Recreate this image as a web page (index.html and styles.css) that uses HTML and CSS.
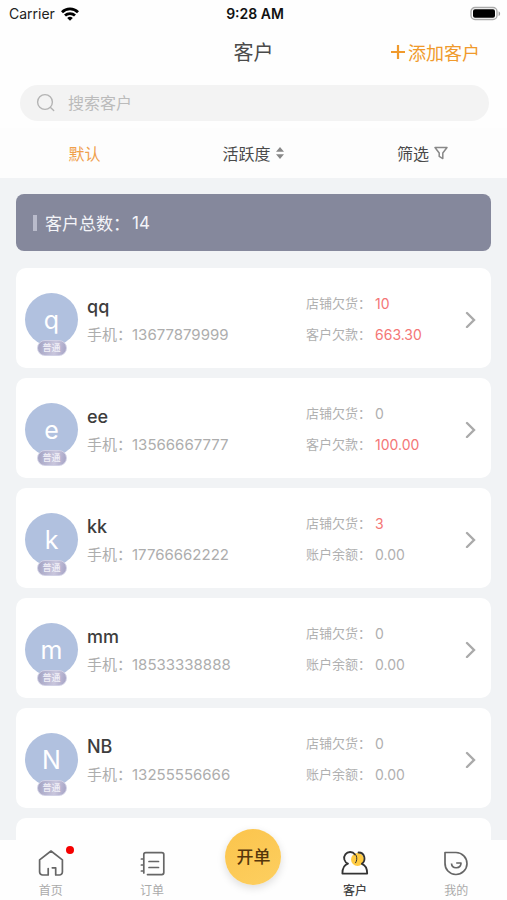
FILE: index.html
```html
<!DOCTYPE html>
<html lang="zh-CN">
<head>
<meta charset="utf-8">
<meta name="viewport" content="width=device-width, initial-scale=1">
<title>客户</title>
<link rel="stylesheet" href="styles.css">
</head>
<body>
<div class="app">
  <div class="status">
    <div class="carrier">Carrier
      <svg width="18" height="14" viewBox="0 0 18 14" fill="none" stroke="#000" stroke-width="2.8"><path d="M1 5.2a11.5 11.5 0 0 1 16 0M4 8.6a7.2 7.2 0 0 1 10 0"/><path d="M9 13.8 6.2 11a4 4 0 0 1 5.6 0z" fill="#000" stroke="none"/></svg>
    </div>
    <div class="time">9:28 AM</div>
    <svg class="battery" width="31" height="16" viewBox="0 0 31 16"><rect x="1" y="1.5" width="26" height="12" rx="4" fill="#fff" stroke="#aaa" stroke-width="1.4"/><rect x="3" y="3.2" width="22" height="8.600" rx="2" fill="#000"/><path d="M28.6 5.2c2 .8 2 4 0 4.8z" fill="#999"/></svg>
  </div>
  <header class="nav">
    <h1>客户</h1>
    <button class="add" type="button"><svg width="16" height="16" viewBox="0 0 16 16" stroke="currentColor" stroke-width="2.2"><path d="M8 1v14M1 8h14"/></svg>添加客户</button>
  </header>
  <label class="search">
    <svg width="20" height="20" viewBox="0 0 20 20" fill="none" stroke="#b4b4b4" stroke-width="1.4" stroke-linecap="round"><circle cx="9" cy="9" r="7.4"/><path d="m14.5 14.5 3.2 3"/></svg>
    <input type="search" placeholder="搜索客户" aria-label="搜索客户">
  </label>
  <div class="filters">
    <button class="active" type="button">默认</button>
    <button type="button">活跃度<svg width="10" height="14" viewBox="0 0 10 14" fill="#888"><path d="M5 1 9 5.8H1zM5 13 1 8.2h8z"/></svg></button>
    <button type="button">筛选<svg class="funnel" width="14" height="14" viewBox="0 0 14 14" fill="none" stroke="#888" stroke-width="1.5" stroke-linejoin="round"><path d="M1 1.500h12L8.800 7v5.600L5.200 10.400V7z"/></svg></button>
  </div>
  <main class="list">
    <div class="total"><i></i>客户总数：<span>14</span></div>
    <a class="card" href="#"><div class="avatar">q<em>普通</em></div><div class="who"><h2>qq</h2><p>手机：<span>13677879999</span></p></div><div class="owed"><p>店铺欠货：<b>10</b></p><p>客户欠款：<b>663.30</b></p></div><svg class="chevron" width="12" height="18" viewBox="0 0 12 18"><path d="m2 3 7 7-7 7"/></svg></a>
    <a class="card" href="#"><div class="avatar">e<em>普通</em></div><div class="who"><h2>ee</h2><p>手机：<span>13566667777</span></p></div><div class="owed"><p>店铺欠货：<span>0</span></p><p>客户欠款：<b>100.00</b></p></div><svg class="chevron" width="12" height="18" viewBox="0 0 12 18"><path d="m2 3 7 7-7 7"/></svg></a>
    <a class="card" href="#"><div class="avatar">k<em>普通</em></div><div class="who"><h2>kk</h2><p>手机：<span>17766662222</span></p></div><div class="owed"><p>店铺欠货：<b>3</b></p><p>账户余额：<span>0.00</span></p></div><svg class="chevron" width="12" height="18" viewBox="0 0 12 18"><path d="m2 3 7 7-7 7"/></svg></a>
    <a class="card" href="#"><div class="avatar">m<em>普通</em></div><div class="who"><h2>mm</h2><p>手机：<span>18533338888</span></p></div><div class="owed"><p>店铺欠货：<span>0</span></p><p>账户余额：<span>0.00</span></p></div><svg class="chevron" width="12" height="18" viewBox="0 0 12 18"><path d="m2 3 7 7-7 7"/></svg></a>
    <a class="card" href="#"><div class="avatar">N<em>普通</em></div><div class="who"><h2>NB</h2><p>手机：<span>13255556666</span></p></div><div class="owed"><p>店铺欠货：<span>0</span></p><p>账户余额：<span>0.00</span></p></div><svg class="chevron" width="12" height="18" viewBox="0 0 12 18"><path d="m2 3 7 7-7 7"/></svg></a>
    <div class="card"></div>
  </main>
  <nav class="tabs">
    <a href="#"><span class="icon"><svg width="28" height="28" viewBox="0 0 28 28" fill="none" stroke="#666" stroke-width="1.7" stroke-linejoin="round" stroke-linecap="round"><path d="M11.200 19.500V26H5.600a3 3 0 0 1-3-3V10.800L14 2l11.400 8.800V23a3 3 0 0 1-3 3h-3.700v-7.200h-3.400"/></svg><i class="dot"></i></span>首页</a>
    <a href="#"><span class="icon"><svg width="28" height="28" viewBox="0 0 28 28" fill="none" stroke="#666" stroke-width="1.7" stroke-linecap="round"><path d="M5.800 6.500V5.600a2 2 0 0 1 2-2h16a2 2 0 0 1 2 2v18a2 2 0 0 1-2 2H9.500M5.800 6.500V24M3.400 10h2.400M3.400 16h2.400M3.400 22h2.400M11 12.500h9.500M11 18.500h9.500"/></svg></span>订单</a>
    <a class="create" href="#"><span>开单</span></a>
    <a class="current" href="#"><span class="icon"><svg width="28" height="28" viewBox="0 0 28 28" fill="none" stroke="#333" stroke-width="1.8" stroke-linecap="round" stroke-linejoin="round"><ellipse cx="16.500" cy="10.500" rx="6.500" ry="6.500" fill="#ffcb42" stroke="none"/><path d="M14 5.500A6 6 0 1 0 7 14.600C3 15.800 1.400 19.500 1.400 24.600h24.800c0-5-1.400-8.400-5.400-9.800 4.400-3 3.400-11.300-3.300-11.300"/><path d="M15.200 6.500c1 2.400.8 5.300-.6 7.300" stroke-width="1"/></svg></span>客户</a>
    <a href="#"><span class="icon"><svg width="28" height="28" viewBox="0 0 28 28" fill="none" stroke="#666" stroke-width="1.7" stroke-linejoin="round"><path d="M3 3.500H14A11 11 0 1 1 3 14z"/><path d="M9.500 14.500c.5 6 9.500 5.500 9.500-.500h-4.800"/></svg></span>我的</a>
  </nav>
</div>
</body>
</html>
```
FILE: styles.css
```css
* { box-sizing: border-box; }
body, h1, h2, p { margin: 0; }
body { font-family: Inter, "Noto Sans CJK SC", sans-serif; color: #4a4a4a; background: #fefefe; }
a { color: inherit; text-decoration: none; }
svg { flex: none; }
button { font: inherit; color: inherit; border: 0; background: none; padding: 0; display: flex; align-items: center; justify-content: center; }
.app { height: 100vh; display: flex; flex-direction: column; overflow: hidden; }

.status { flex: none; display: grid; grid-template-columns: 1fr auto 1fr; align-items: center; height: 27px; padding: 0 6px 0 9px; font-size: 14px; color: #222; }
.carrier { display: flex; align-items: center; gap: 6px; }
.time { font-weight: 600; color: #111; }
.battery { justify-self: end; }

.nav { flex: none; display: grid; grid-template-columns: 1fr auto 1fr; align-items: center; height: 49px; padding: 0 27px; }
.nav h1 { grid-column: 2; font-size: 20px; font-weight: 400; }
.add { justify-self: end; gap: 2px; font-size: 18px; color: #f09a2c; }

.search { flex: none; display: flex; align-items: center; gap: 12px; height: 36px; margin: 9px 18px 7px 20px; padding: 0 16px; border-radius: 18px; background: #f3f3f3; }
.search input { flex: 1; min-width: 0; border: 0; padding: 0; outline: 0; background: none; font: inherit; font-size: 16px; }
.search input::placeholder { color: #bbb; }

.filters { flex: none; display: grid; grid-template-columns: repeat(3, 1fr); height: 50px; font-size: 16px; background: #fdfdfd; }
.filters button { gap: 4px; }
.filters .active { color: #f0a04b; }
.filters .funnel { margin-left: 1px; }

.list { flex: 1; min-height: 0; overflow: hidden; display: flex; flex-direction: column; gap: 10px; padding: 16px; background: #f1f3f5; }
.total { flex: none; display: flex; align-items: center; height: 57px; margin-bottom: 7px; padding: 0 17px; border-radius: 8px; background: #85889c; color: #f4f4f8; font-size: 17px; }
.total i { width: 4px; height: 16px; margin-right: 8px; background: #b9bbcb; }
.total span { margin-left: 2px; }

.card { flex: none; display: flex; align-items: center; height: 100px; padding: 2px 14px 0 9px; border-radius: 10px; background: #fff; }
.avatar { position: relative; flex: none; display: flex; align-items: center; justify-content: center; width: 53px; height: 53px; padding-top: 2px; border-radius: 50%; background: #b1c1df; color: #fff; font-size: 25px; }
.avatar em { position: absolute; left: 50%; bottom: -10px; margin-left: -15px; width: 30px; height: 16px; border-radius: 8px; background: linear-gradient(100deg, #a3a2c2, #c9c6dd 60%, #a5a2c4); border: 1px solid #d2d2e6; color: #f0eff7; font-size: 9px; font-weight: 500; font-style: normal; line-height: 14px; text-align: center; }
.who { flex: 1; margin-left: 9px; padding-top: 4px; }
.who h2 { font-size: 18px; font-weight: 500; line-height: 28px; color: #3d3d3d; }
.who p { font-size: 15px; line-height: 28px; color: #adadad; }
.owed { width: 159px; font-size: 13px; line-height: 31px; color: #b0b0b0; }
.owed p { display: flex; }
.owed b { font-weight: 400; color: #f47676; }
.owed b, .owed span { margin-left: 4px; font-size: 14px; }
.chevron { fill: none; stroke: #aaa; stroke-width: 2.4; stroke-linecap: round; }

.tabs { flex: none; display: grid; grid-template-columns: repeat(5, 1fr); height: 60px; background: #fefefe; font-size: 12px; color: #aaa; }
.tabs a { display: flex; flex-direction: column; align-items: center; padding-top: 9px; line-height: 18px; }
.icon { position: relative; height: 33px; }
.icon svg { display: block; }
.dot { position: absolute; top: -3px; right: -9px; width: 8px; height: 8px; border-radius: 50%; background: #f50000; }
.tabs .current { color: #444; font-weight: 500; }
.tabs .create { padding: 0; }
.create span { position: relative; display: flex; flex: none; align-items: center; justify-content: center; width: 56px; height: 56px; margin-top: -11px; border-radius: 50%; background: linear-gradient(150deg, #fbc44c, #fdcf60); box-shadow: 0 3px 8px #0002; color: #56360b; font-size: 17px; font-weight: 500; }
```
